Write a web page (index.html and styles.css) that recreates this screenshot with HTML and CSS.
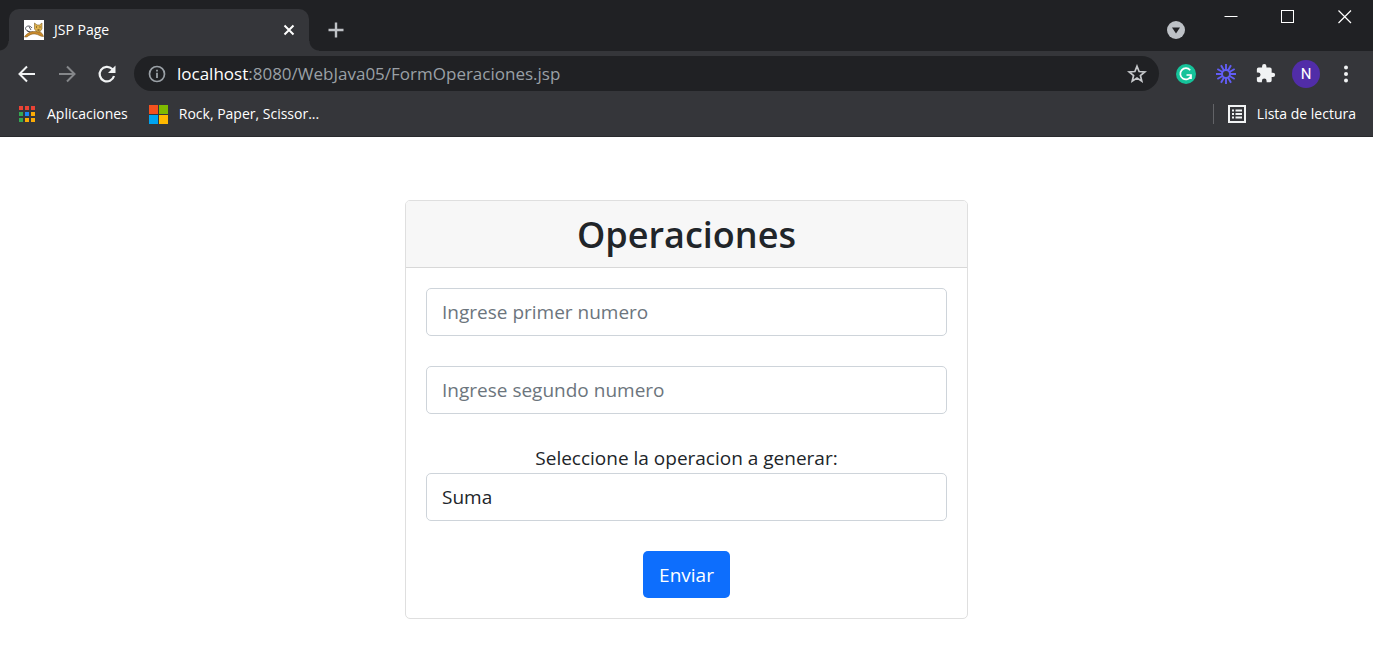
FILE: index.html
```html
<!DOCTYPE html>
<html lang="es">
<head>
<meta charset="utf-8">
<title>JSP Page</title>
<link rel="stylesheet" href="styles.css">
</head>
<body>
<header class="browser">
  <div class="titlebar">
    <div class="tab">
      <svg class="favicon" width="20" height="20" viewBox="0 0 20 20" aria-hidden="true">
        <rect width="20" height="20" fill="#fff"/>
        <path d="M9 12C5 12 2 11 1.500 8.500C2 5.500 6 5 8 8M3 10.500L6 12.500M5 6.500L7 10" fill="none" stroke="#33343c" stroke-width=".8"/>
        <path d="M.5 17C2.500 13 7 11.500 10 11.500L15 11.500C18 12.500 19 14.500 19.500 16.500C17 17 15 14.500 11 14C8 13.500 5 15 3 17Z" fill="#c98a2b" stroke="#7b5620" stroke-width=".5"/>
        <path d="M10.500 3L13 5H15.500L18 3V9L15.500 12H13L10.500 9Z" fill="#dfb34d" stroke="#806028" stroke-width=".6"/>
        <path d="M12 7h1M15.500 7h1M13.500 10h2" stroke="#4a3415"/>
      </svg>
      <span class="tab-title">JSP Page</span>
      <button class="tab-close" aria-label="Cerrar pestaña">
        <svg width="12" height="12" viewBox="0 0 12 12"><path d="M1.500 1.500L10.500 10.500M10.500 1.500L1.500 10.500" stroke="#fff" stroke-width="2"/></svg>
      </button>
    </div>
    <button class="new-tab" aria-label="Nueva pestaña">
      <svg width="16" height="16" viewBox="0 0 16 16"><path d="M8 .5V15.500M.5 8H15.500" stroke="#bfc2c6" stroke-width="2.400"/></svg>
    </button>
    <button class="tab-search" aria-label="Buscar pestañas">
      <svg width="18" height="18" viewBox="0 0 18 18"><circle cx="9" cy="9" r="9" fill="#bdc1c6"/><path d="M5 6.500H13L9 12.500Z" fill="#202124"/></svg>
    </button>
    <div class="window-controls">
      <button aria-label="Minimizar"><svg width="14" height="14" viewBox="0 0 14 14"><path d="M.5 6.500H13.500" stroke="#fff"/></svg></button>
      <button aria-label="Maximizar"><svg width="14" height="14" viewBox="0 0 14 14"><rect x=".5" y=".5" width="12" height="12" fill="none" stroke="#fff"/></svg></button>
      <button aria-label="Cerrar"><svg width="14" height="14" viewBox="0 0 14 14"><path d="M.5 .5L13 13M13 .5L.5 13" stroke="#fff" stroke-width="1.200"/></svg></button>
    </div>
  </div>

  <div class="toolbar">
    <button class="tool" aria-label="Atrás"><svg width="18" height="18" viewBox="0 0 18 18"><path d="M17 9H2M9 1.500L1.500 9L9 16.500" fill="none" stroke="#f1f3f4" stroke-width="2"/></svg></button>
    <button class="tool" aria-label="Adelante"><svg width="18" height="18" viewBox="0 0 18 18"><path d="M1 9H16M9 1.500L16.500 9L9 16.500" fill="none" stroke="#85878a" stroke-width="2"/></svg></button>
    <button class="tool" aria-label="Recargar"><svg width="20" height="20" viewBox="0 0 20 20"><path d="M17 12A7.300 7.300 0 1 1 15.200 5L17 6.800" fill="none" stroke="#f1f3f4" stroke-width="2.200"/><path d="M18.500 1.500V9H11Z" fill="#f1f3f4"/></svg></button>
    <div class="omnibox">
      <svg width="18" height="18" viewBox="0 0 18 18" aria-hidden="true"><circle cx="9" cy="9" r="7.500" fill="none" stroke="#9aa0a6" stroke-width="1.700"/><path d="M9 7.800V13M9 4.800V6.600" stroke="#9aa0a6" stroke-width="1.800"/></svg>
      <span class="url"><span class="host">localhost</span>:8080/WebJava05/FormOperaciones.jsp</span>
      <button class="bookmark-star" aria-label="Añadir a marcadores"><svg width="20" height="20" viewBox="0 0 20 20"><path d="M10 2.200L12.100 7.500L17.800 7.900L13.400 11.500L14.800 17.100L10 14L5.200 17.100L6.600 11.500L2.200 7.900L7.900 7.500Z" fill="none" stroke="#c6c8cb" stroke-width="1.700"/></svg></button>
    </div>
    <button class="tool" aria-label="Grammarly"><svg width="20" height="20" viewBox="0 0 20 20"><circle cx="10" cy="10" r="10" fill="#15c39a"/><path d="M14.200 6.200A5.600 5.600 0 1 0 15 12.200M10.500 11H15V15" fill="none" stroke="#fff" stroke-width="1.700"/></svg></button>
    <button class="tool" aria-label="Loom"><svg width="20" height="20" viewBox="0 0 20 20"><g stroke="#625df5" stroke-width="1.900"><path id="ray" d="M10 0V6.500M10 13.500V20"/><use href="#ray" transform="rotate(30 10 10)"/><use href="#ray" transform="rotate(60 10 10)"/><use href="#ray" transform="rotate(90 10 10)"/><use href="#ray" transform="rotate(120 10 10)"/><use href="#ray" transform="rotate(150 10 10)"/></g><circle cx="10" cy="10" r="4" fill="none" stroke="#625df5" stroke-width="2"/></svg></button>
    <button class="tool" aria-label="Extensiones"><svg width="20" height="20" viewBox="1 1 23 23"><path d="M20.500 11H19V7a2 2 0 0 0-2-2h-4V3.500a2.500 2.500 0 0 0-5 0V5H4a2 2 0 0 0-2 2v3.800h1.500a2.700 2.700 0 0 1 0 5.400H2V20a2 2 0 0 0 2 2h3.800v-1.500a2.700 2.700 0 0 1 5.400 0V22H17a2 2 0 0 0 2-2v-4h1.500a2.500 2.500 0 0 0 0-5Z" fill="#f1f3f4"/></svg></button>
    <button class="tool" aria-label="Perfil"><span class="avatar">N</span></button>
    <button class="tool" aria-label="Menú"><svg width="4" height="18" viewBox="0 0 4 18"><g fill="#f1f3f4"><circle cx="2" cy="2.500" r="2"/><circle cx="2" cy="9" r="2"/><circle cx="2" cy="15.500" r="2"/></g></svg></button>
  </div>

  <nav class="bookmarks">
    <a class="bookmark" href="#">
      <svg width="18" height="18" viewBox="0 0 18 18" aria-hidden="true"><path d="M1 1h4v4H1zM7 1h4v4H7zM13 1h4v4h-4z" fill="#ea4335"/><path d="M1 7h4v4H1zM1 13h4v4H1zM7 13h4v4H7z" fill="#34a853"/><path d="M7 7h4v4H7z" fill="#1a85f5"/><path d="M13 7h4v4h-4zM7 13h4v4H7zM13 13h4v4h-4z" fill="#fbab05"/></svg>
      Aplicaciones
    </a>
    <a class="bookmark" href="#">
      <svg width="20" height="20" viewBox="0 0 20 20" aria-hidden="true"><path d="M1 1h9v9H1z" fill="#f4511e"/><path d="M11 1h9v9h-9z" fill="#7fba00"/><path d="M1 11h9v9H1z" fill="#00a4ef"/><path d="M11 11h9v9h-9z" fill="#ffb900"/></svg>
      Rock, Paper, Scissor...
    </a>
    <a class="bookmark reading-list" href="#">
      <svg width="18" height="18" viewBox="0 0 18 18" aria-hidden="true"><rect x="1" y="1" width="16" height="16" fill="none" stroke="#f1f3f4" stroke-width="2"/><path d="M4 5.500h2M4 9h2M4 12.500h2M7.500 5.500H14M7.500 9H14M7.500 12.500H14" stroke="#f1f3f4" stroke-width="1.800"/></svg>
      Lista de lectura
    </a>
  </nav>
</header>

<main class="page">
  <section class="card">
    <h1 class="card-header">Operaciones</h1>
    <form class="card-body">
      <input class="control" type="text" placeholder="Ingrese primer numero" aria-label="Ingrese primer numero">
      <input class="control" type="text" placeholder="Ingrese segundo numero" aria-label="Ingrese segundo numero">
      <div class="field">
        <label for="operacion">Seleccione la operacion a generar:</label>
        <select class="control" id="operacion">
          <option>Suma</option>
        </select>
      </div>
      <button class="submit" type="button">Enviar</button>
    </form>
  </section>
</main>
</body>
</html>
```

FILE: styles.css
```css
* {
  box-sizing: border-box;
}

body {
  margin: 0;
  background: #fff;
  color: #212529;
  font-family: "Segoe UI", "Open Sans", "Noto Sans", sans-serif;
}

button {
  display: flex;
  align-items: center;
  justify-content: center;
  margin: 0;
  padding: 0;
  border: 0;
  background: none;
  font-family: inherit;
}

svg {
  display: block;
  flex: none;
}

/* Browser window */
.browser {
  background: #35363a;
  border-bottom: 1px solid #292a2d;
  color: #fff;
  font-size: 14px;
}

.titlebar {
  display: flex;
  align-items: flex-end;
  height: 51px;
  padding-left: 9px;
  background: #202124;
}

.tab {
  position: relative;
  display: flex;
  align-items: center;
  gap: 10px;
  width: 300px;
  height: 42px;
  padding: 0 12px 0 15px;
  border-radius: 10px 10px 0 0;
  background: #35363a;
}

.tab::before,
.tab::after {
  content: "";
  position: absolute;
  bottom: 0;
  width: 10px;
  height: 10px;
}

.tab::before {
  right: 100%;
  background: radial-gradient(circle at 0 0, #202124 9px, #35363a 10px);
}

.tab::after {
  left: 100%;
  background: radial-gradient(circle at 100% 0, #202124 9px, #35363a 10px);
}

.tab-title {
  flex: 1;
  padding-bottom: 2px;
}

.tab-close {
  width: 16px;
  height: 16px;
}

.new-tab {
  width: 54px;
  height: 42px;
}

.tab-search {
  width: 34px;
  height: 42px;
  margin-left: auto;
  margin-right: 9px;
}

.window-controls {
  display: flex;
  align-self: flex-start;
}

.window-controls button {
  width: 57px;
  height: 33px;
}

.toolbar {
  display: flex;
  align-items: center;
  height: 45px;
  padding: 0 7px;
}

.tool {
  width: 40px;
  height: 36px;
}

.omnibox {
  display: flex;
  flex: 1;
  align-items: center;
  gap: 11px;
  height: 35px;
  margin: 0 7px;
  padding: 0 12px 0 14px;
  border-radius: 18px;
  background: #202124;
  font-size: 17px;
}

.url {
  flex: 1;
  color: #9aa0a6;
}

.host {
  color: #fff;
}

.avatar {
  width: 28px;
  height: 28px;
  border-radius: 50%;
  background: #512da8;
  color: #fff;
  font-family: Roboto, sans-serif;
  font-size: 15px;
  line-height: 28px;
}

.bookmarks {
  display: flex;
  align-items: center;
  gap: 20px;
  height: 40px;
  padding: 0 17px 5px 18px;
}

.bookmark {
  display: flex;
  align-items: center;
  gap: 11px;
  color: #fff;
  text-decoration: none;
}

.reading-list {
  height: 20px;
  margin-left: auto;
  padding-left: 14px;
  border-left: 1px solid #626367;
}

/* Page content */
.page {
  padding: 63px 0 40px;
}

.card {
  width: 41%;
  min-width: 360px;
  margin: 0 auto;
  border: 1px solid #dfdfdf;
  border-radius: 5px;
  overflow: hidden;
}

.card-header {
  margin: 0;
  padding: 9px 20px 7px;
  border-bottom: 1px solid #d8d8d8;
  background: #f7f7f7;
  font-size: 36px;
  font-weight: 600;
  line-height: 50px;
  text-align: center;
}

.card-body {
  display: flex;
  flex-direction: column;
  gap: 30px;
  padding: 20px;
  font-size: 19px;
}

.control {
  display: block;
  width: 100%;
  height: 48px;
  margin: 0;
  padding: 0 15px;
  border: 1px solid #ced4da;
  border-radius: 5px;
  appearance: none;
  background: #fff;
  color: #212529;
  font-family: inherit;
  font-size: 19px;
}

.control::placeholder {
  color: #6c757d;
  opacity: 1;
}

.field label {
  display: block;
  line-height: 29px;
  text-align: center;
}

.submit {
  align-self: center;
  height: 47px;
  padding: 0 16px;
  border-radius: 5px;
  background: #0d6efd;
  color: #fff;
  font-size: 19px;
}
```
